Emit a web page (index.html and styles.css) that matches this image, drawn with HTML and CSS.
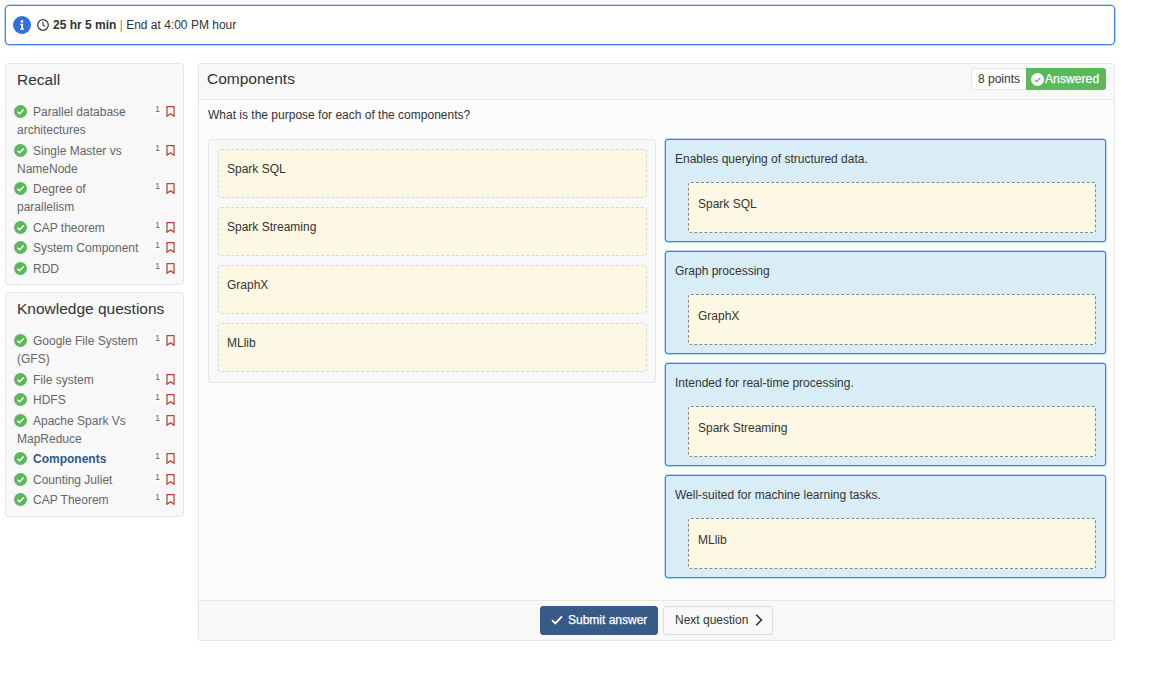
FILE: index.html
```html
<!DOCTYPE html>
<html lang="en">
<head>
  <meta charset="UTF-8" />
  <meta name="viewport" content="width=device-width, initial-scale=1.0" />
  <title>Components</title>
  <link rel="stylesheet" href="styles.css">
</head>
<body>
  <svg class="sprites" width="0" height="0">
    <symbol id="ok" viewBox="0 0 12 12">
      <circle cx="6" cy="6" r="6" fill="#5cb85c"/>
      <path d="M3.2 6.2 5.2 8.1 8.9 4.2" fill="none" stroke="#fff" stroke-width="1.4"/>
    </symbol>
    <symbol id="mark" viewBox="0 0 9 11">
      <path d="M1 .6h7v9.7L4.5 7.7 1 10.3z" fill="none" stroke="#bb3f2c" stroke-width="1.2"/>
    </symbol>
  </svg>

  <div class="alert">
    <svg class="info" viewBox="0 0 18 18" width="18" height="18">
      <circle cx="9" cy="9" r="9" fill="#2f6fde"/>
      <circle cx="9" cy="5.4" r="1.3" fill="#fff"/>
      <path d="M7.2 7.8h2.9v4.6h1v1.3H7.1v-1.3h1v-3.3h-.9z" fill="#fff"/>
    </svg>
    <svg class="clock" viewBox="0 0 12 12" width="12" height="12">
      <circle cx="6" cy="6" r="5.3" fill="none" stroke="#333" stroke-width="1.2"/>
      <path d="M6 2.8V6.3L8.2 7.6" fill="none" stroke="#333" stroke-width="1.1"/>
    </svg>
    <span><b>25 hr 5 min</b> <span class="pipe">|</span> End at 4:00 PM hour</span>
  </div>

  <div class="layout">
    <div class="sidebar">
      <div class="nav-card">
        <h3>Recall</h3>
        <div class="nav-item"><span class="extras"><sup>1</sup><svg width="9" height="11"><use href="#mark"/></svg></span><svg class="tick" width="13" height="13"><use href="#ok"/></svg>Parallel database architectures</div>
        <div class="nav-item"><span class="extras"><sup>1</sup><svg width="9" height="11"><use href="#mark"/></svg></span><svg class="tick" width="13" height="13"><use href="#ok"/></svg>Single Master vs NameNode</div>
        <div class="nav-item"><span class="extras"><sup>1</sup><svg width="9" height="11"><use href="#mark"/></svg></span><svg class="tick" width="13" height="13"><use href="#ok"/></svg>Degree of parallelism</div>
        <div class="nav-item"><span class="extras"><sup>1</sup><svg width="9" height="11"><use href="#mark"/></svg></span><svg class="tick" width="13" height="13"><use href="#ok"/></svg>CAP theorem</div>
        <div class="nav-item"><span class="extras"><sup>1</sup><svg width="9" height="11"><use href="#mark"/></svg></span><svg class="tick" width="13" height="13"><use href="#ok"/></svg>System Component</div>
        <div class="nav-item"><span class="extras"><sup>1</sup><svg width="9" height="11"><use href="#mark"/></svg></span><svg class="tick" width="13" height="13"><use href="#ok"/></svg>RDD</div>
      </div>
      <div class="nav-card">
        <h3>Knowledge questions</h3>
        <div class="nav-item"><span class="extras"><sup>1</sup><svg width="9" height="11"><use href="#mark"/></svg></span><svg class="tick" width="13" height="13"><use href="#ok"/></svg>Google File System (GFS)</div>
        <div class="nav-item"><span class="extras"><sup>1</sup><svg width="9" height="11"><use href="#mark"/></svg></span><svg class="tick" width="13" height="13"><use href="#ok"/></svg>File system</div>
        <div class="nav-item"><span class="extras"><sup>1</sup><svg width="9" height="11"><use href="#mark"/></svg></span><svg class="tick" width="13" height="13"><use href="#ok"/></svg>HDFS</div>
        <div class="nav-item"><span class="extras"><sup>1</sup><svg width="9" height="11"><use href="#mark"/></svg></span><svg class="tick" width="13" height="13"><use href="#ok"/></svg>Apache Spark Vs MapReduce</div>
        <div class="nav-item current"><span class="extras"><sup>1</sup><svg width="9" height="11"><use href="#mark"/></svg></span><svg class="tick" width="13" height="13"><use href="#ok"/></svg>Components</div>
        <div class="nav-item"><span class="extras"><sup>1</sup><svg width="9" height="11"><use href="#mark"/></svg></span><svg class="tick" width="13" height="13"><use href="#ok"/></svg>Counting Juliet</div>
        <div class="nav-item"><span class="extras"><sup>1</sup><svg width="9" height="11"><use href="#mark"/></svg></span><svg class="tick" width="13" height="13"><use href="#ok"/></svg>CAP Theorem</div>
      </div>
    </div>

    <div class="question">
      <div class="question-head">
        <h2>Components</h2>
        <div class="badges">
          <span class="points">8 points</span>
          <span class="answered">
            <svg viewBox="0 0 13 13" width="13" height="13">
              <circle cx="6.5" cy="6.5" r="6.5" fill="#fff"/>
              <path d="M3.8 6.7 5.8 8.6 9.3 4.8" fill="none" stroke="#5cb85c" stroke-width="1.2"/>
            </svg>Answered
          </span>
        </div>
      </div>

      <div class="question-body">
        <p class="prompt">What is the purpose for each of the components?</p>
        <div class="match">
          <div class="pool">
            <div class="option">Spark SQL</div>
            <div class="option">Spark Streaming</div>
            <div class="option">GraphX</div>
            <div class="option">MLlib</div>
          </div>
          <div class="targets">
            <div class="target">
              <p>Enables querying of structured data.</p>
              <div class="dropped">Spark SQL</div>
            </div>
            <div class="target">
              <p>Graph processing</p>
              <div class="dropped">GraphX</div>
            </div>
            <div class="target">
              <p>Intended for real-time processing.</p>
              <div class="dropped">Spark Streaming</div>
            </div>
            <div class="target">
              <p>Well-suited for machine learning tasks.</p>
              <div class="dropped">MLlib</div>
            </div>
          </div>
        </div>
      </div>

      <div class="question-foot">
        <button class="btn-submit" type="button">
          <svg viewBox="0 0 12 10" width="12" height="10"><path d="M1 5.2 4.3 8.4 11 1.4" fill="none" stroke="#fff" stroke-width="1.8"/></svg>
          Submit answer
        </button>
        <button class="btn-next" type="button">
          Next question
          <svg viewBox="0 0 8 12" width="8" height="12"><path d="M1.2 .8 6.4 6 1.2 11.2" fill="none" stroke="#333" stroke-width="1.6"/></svg>
        </button>
      </div>
    </div>
  </div>
</body>
</html>
```

FILE: styles.css
```css
* {
  box-sizing: border-box;
}
body {
  margin: 0;
  padding: 5px 39px 0 5px;
  font-family: "Liberation Sans", Arial, sans-serif;
  font-size: 12px;
  line-height: 18px;
  color: #333;
  background-color: white;
}
.sprites {
  position: absolute;
}
.alert {
  display: flex;
  align-items: center;
  height: 40px;
  padding: 0 7px;
  border: 1px solid #3b80e6;
  border-radius: 4px;
  box-shadow: 0 0 0 .5px rgba(59, 128, 230, .6);
}
.alert .info {
  margin-right: 6px;
}
.alert .clock {
  margin-right: 4px;
}
.pipe {
  color: #b5812f;
}
.layout {
  display: flex;
  align-items: flex-start;
  gap: 14px;
  margin-top: 18px;
}
.sidebar {
  display: flex;
  flex-direction: column;
  gap: 7px;
  width: 179px;
  flex-shrink: 0;
}
.nav-card {
  padding: 6px 8px 4px 11px;
  background-color: #f8f8f8;
  border: 1px solid #e7e7e7;
  border-radius: 3px;
}
.nav-card h3 {
  margin: 0 0 13px;
  font-size: 15.5px;
  font-weight: normal;
  line-height: 20px;
  color: #333;
}
.nav-item {
  margin-bottom: 2.5px;
  color: #666;
}
.nav-item.current {
  font-weight: bold;
  color: #2f5a8a;
}
.tick {
  margin: 0 6px 0 -3px;
  vertical-align: -2px;
}
.extras {
  float: right;
  display: flex;
  align-items: center;
  gap: 6px;
  height: 17px;
  margin-left: 8px;
}
.extras sup {
  padding: 0 1px;
  font-size: 9px;
  font-weight: normal;
  line-height: 1;
  color: #666;
  background-color: #fcfcfc;
  position: relative;
  left: 1px;
  top: -2px;
}
.question {
  flex: 1;
  height: 578px;
  display: flex;
  flex-direction: column;
  background-color: #fcfcfc;
  border: 1px solid #e7e7e7;
  border-radius: 3px;
}
.question-head {
  display: flex;
  justify-content: space-between;
  align-items: flex-start;
  height: 36px;
  padding: 4px 8px 0;
  background-color: #f8f8f8;
  border-bottom: 1px solid #e7e7e7;
}
.question-head h2 {
  margin: 0;
  font-size: 15.5px;
  font-weight: normal;
  line-height: 22px;
}
.badges {
  display: flex;
  height: 22px;
}
.points {
  width: 55px;
  text-align: center;
  line-height: 20px;
  color: #333;
  background-color: white;
  border: 1px solid #e7e7e7;
  border-right: 0;
  border-radius: 3px 0 0 3px;
}
.answered {
  display: flex;
  align-items: center;
  gap: 1px;
  width: 80px;
  padding-left: 5px;
  color: white;
  background-color: #5cb85c;
  border-radius: 0 3px 3px 0;
  letter-spacing: .1px;
  -webkit-text-stroke: .25px white;
}
.question-body {
  flex: 1;
  padding: 6px 8px 0 9px;
}
.prompt {
  margin: 0 0 15px;
}
.match {
  display: flex;
  align-items: flex-start;
  gap: 9px;
}
.pool {
  width: 448px;
  flex-shrink: 0;
  padding: 9px 8px 1px 9px;
  background-color: #f8f8f8;
  border: 1px solid #e7e7e7;
  border-radius: 3px;
}
.option {
  height: 49px;
  margin-bottom: 9px;
  padding: 10px 8px;
  background-color: #fdf8e3;
  border: 1px dashed #d8d8d8;
  border-radius: 3px;
}
.targets {
  flex: 1;
  display: flex;
  flex-direction: column;
  gap: 9px;
}
.target {
  height: 103px;
  padding: 10px 9px 0;
  background-color: #d9edf7;
  border: 1px solid #3b80e6;
  border-radius: 3px;
  box-shadow: 0 0 0 .5px rgba(59, 128, 230, .6);
}
.target p {
  margin: 0 0 14px;
}
.dropped {
  height: 51px;
  margin-left: 13px;
  padding: 12px 9px;
  background-color: #fdf8e3;
  border: 1px dashed #888;
  border-radius: 3px;
}
.question-foot {
  display: flex;
  justify-content: center;
  gap: 5px;
  height: 40px;
  padding-top: 5px;
  background-color: #f8f8f8;
  border-top: 1px solid #e7e7e7;
}
.question-foot button {
  display: flex;
  align-items: center;
  height: 29px;
  padding-bottom: 2px;
  font-family: inherit;
  font-size: 12px;
  border-radius: 3px;
}
.btn-submit {
  gap: 5px;
  width: 118px;
  padding-left: 10px;
  padding-right: 0;
  color: white;
  background-color: #375a87;
  border: 1px solid #375a87;
  -webkit-text-stroke: .25px white;
}
.btn-next {
  gap: 7px;
  width: 110px;
  padding-left: 11px;
  padding-right: 0;
  color: #333;
  background-color: #f8f8f8;
  border: 1px solid #ddd;
}
```
